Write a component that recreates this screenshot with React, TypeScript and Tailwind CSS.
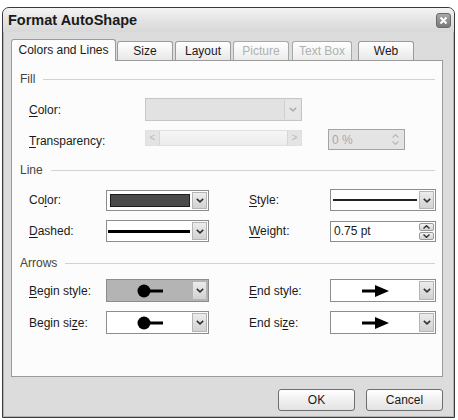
import React from "react";

const Chevron = ({ color = "#333" }: { color?: string }) => (
  <svg width="8" height="5" viewBox="0 0 8 5">
    <path d="M0.8 0.8 L4 3.8 L7.2 0.8" fill="none" stroke={color} strokeWidth="1.6" />
  </svg>
);

const DropBtn = () => (
  <div className="my-px mr-px w-[15px] flex items-center justify-center border border-[#b4b4b4] bg-gradient-to-b from-[#ececec] to-[#d2d2d2]">
    <Chevron />
  </div>
);

const Dot = () => (
  <svg width="26" height="14" viewBox="0 0 26 14">
    <circle cx="7" cy="7" r="6.5" fill="#000" />
    <rect x="7" y="5.5" width="19" height="3" fill="#000" />
  </svg>
);

const Arrow = () => (
  <svg width="27" height="12" viewBox="0 0 27 12">
    <rect x="0" y="4.5" width="16" height="3" fill="#000" />
    <polygon points="13,0 27,6 13,12" fill="#000" />
  </svg>
);

const U = ({ c }: { c: string }) => <span className="underline underline-offset-[2px]">{c}</span>;

const Section = ({ title, mt }: { title: string; mt: string }) => (
  <div className={`flex items-center h-[14px] pl-[8px] pr-[7px] ${mt}`}>
    <span className="text-[#444] leading-none">{title}</span>
    <div className="flex-1 h-px bg-[#d2d2d2] ml-[8px]" />
  </div>
);

export default function App() {
  return (
    <div className="w-[458px] h-[420px] bg-white pl-[2px] pr-[3px] pt-[7px] font-['Liberation_Sans',Arial,sans-serif] text-[12px] text-[#1a1a1a] overflow-hidden">
      <div className="h-[411px] rounded-t-[7px] border border-[#3a3a3a] bg-[#dcdcdc] flex flex-col shadow-[inset_0_0_0_1px_#b4b4b4]">
        {/* title bar */}
        <div className="h-[24px] rounded-t-[6px] bg-gradient-to-b from-[#f4f4f4] via-[#e4e4e4] to-[#d8d8d8] flex items-center justify-between pl-[5px] pr-[3px]">
          <span className="font-bold text-[14.5px] text-[#1a1a1a] leading-none">Format AutoShape</span>
          <div className="w-[15px] h-[15px] rounded-[3px] border border-[#6a6a6a] bg-gradient-to-b from-[#a8a8a8] to-[#7a7a7a] flex items-center justify-center">
            <svg width="9" height="9" viewBox="0 0 9 9">
              <path d="M1.5 1.5 L7.5 7.5 M7.5 1.5 L1.5 7.5" stroke="#fff" strokeWidth="2" />
            </svg>
          </div>
        </div>

        <div className="flex flex-col pl-[8px] pr-[11px] pt-[6px]">
          {/* tabs */}
          <div className="flex items-end h-[22px] relative z-10">
            <div className="w-[105px] h-[22px] -mb-px border border-b-0 border-[#9a9a9a] rounded-t-[3px] bg-[#fcfcfc] flex items-center justify-center pb-[1px]">
              Colors and Lines
            </div>
            <div className="w-[56px] h-[19px] border border-b-0 border-[#9a9a9a] rounded-t-[3px] bg-gradient-to-b from-[#ffffff] to-[#e8e8e8] flex items-center justify-center ml-[1px]">
              Size
            </div>
            <div className="w-[56px] h-[19px] border border-b-0 border-[#9a9a9a] rounded-t-[3px] bg-gradient-to-b from-[#ffffff] to-[#e8e8e8] flex items-center justify-center ml-[2px]">
              Layout
            </div>
            <div className="w-[56px] h-[19px] border border-b-0 border-[#a8a8a8] rounded-t-[3px] bg-gradient-to-b from-[#ffffff] to-[#ececec] flex items-center justify-center ml-[2px] text-[#b0b0b0]">
              Picture
            </div>
            <div className="w-[60px] h-[19px] border border-b-0 border-[#a8a8a8] rounded-t-[3px] bg-gradient-to-b from-[#ffffff] to-[#ececec] flex items-center justify-center ml-[3px] text-[#b0b0b0]">
              Text Box
            </div>
            <div className="w-[56px] h-[19px] border border-b-0 border-[#9a9a9a] rounded-t-[3px] bg-gradient-to-b from-[#ffffff] to-[#e8e8e8] flex items-center justify-center ml-[6px]">
              Web
            </div>
          </div>

          {/* panel */}
          <div className="h-[317px] border border-[#9a9a9a] bg-[#fcfcfc] flex flex-col">
            <Section title="Fill" mt="mt-[11px]" />

            <div className="flex items-center mt-[12px] pl-[17px] h-[23px]">
              <div className="w-[116px]">
                <U c="C" />olor:
              </div>
              <div className="w-[157px] h-[23px] border border-[#c6c6c6] bg-[#e2e2e2] flex">
                <div className="flex-1" />
                <div className="w-[16px] flex items-center justify-center border-l border-[#d0d0d0] bg-[#e6e6e6] my-px mr-px">
                  <Chevron color="#b0b0b0" />
                </div>
              </div>
            </div>

            <div className="flex items-start mt-[8px] pl-[17px] h-[21px]">
              <div className="w-[116px] pt-[3px]">
                <U c="T" />ransparency:
              </div>
              <div className="w-[157px] h-[16px] mt-[1px] border border-[#e0e0e0] bg-gradient-to-b from-[#f6f6f6] to-[#ececec] flex justify-between">
                <div className="w-[14px] h-full bg-[#e4e4e4] border-r border-[#d6d6d6] flex items-center justify-center text-[#b8b8b8] text-[10px] leading-none">
                  &lt;
                </div>
                <div className="w-[14px] h-full bg-[#e4e4e4] border-l border-[#d6d6d6] flex items-center justify-center text-[#b8b8b8] text-[10px] leading-none">
                  &gt;
                </div>
              </div>
              <div className="ml-[26px] w-[77px] h-[21px] border border-[#a4a4a4] bg-[#e4e4e4] flex items-center">
                <span className="flex-1 pl-[3px] text-[#a8a8a8]">0 %</span>
                <div className="w-[14px] h-[19px] flex flex-col items-center justify-center gap-[3px] mr-[2px]">
                  <svg width="7" height="4" viewBox="0 0 7 4"><path d="M0.5 3.5 L3.5 0.7 L6.5 3.5" fill="none" stroke="#bbb" strokeWidth="1.3" /></svg>
                  <svg width="7" height="4" viewBox="0 0 7 4"><path d="M0.5 0.5 L3.5 3.3 L6.5 0.5" fill="none" stroke="#bbb" strokeWidth="1.3" /></svg>
                </div>
              </div>
            </div>

            <Section title="Line" mt="mt-[13px]" />

            <div className="grid grid-cols-[77px_103px_40px_81px_106px] items-center mt-[12px] pl-[17px] h-[21px]">
              <div>
                Co<U c="l" />or:
              </div>
              <div className="h-[21px] border border-[#8c8c8c] bg-white flex">
                <div className="flex-1 p-[3px] pr-[2px]">
                  <div className="w-full h-full bg-[#4a4a4a] border border-[#1c1c1c]" />
                </div>
                <DropBtn />
              </div>
              <div />
              <div>
                <U c="S" />tyle:
              </div>
              <div className="h-[22px] border border-[#8c8c8c] bg-white flex">
                <div className="flex-1 flex items-center px-[2px]">
                  <div className="w-full h-[1.5px] bg-[#222]" />
                </div>
                <DropBtn />
              </div>
            </div>

            <div className="grid grid-cols-[77px_103px_40px_81px_106px] items-center mt-[10px] pl-[17px] h-[22px]">
              <div>
                <U c="D" />ashed:
              </div>
              <div className="h-[22px] border border-[#8c8c8c] bg-white flex">
                <div className="flex-1 flex items-center pl-[1px] pr-[2px]">
                  <div className="w-full h-[3px] bg-black" />
                </div>
                <DropBtn />
              </div>
              <div />
              <div>
                <U c="W" />eight:
              </div>
              <div className="h-[21px] border border-[#8c8c8c] bg-white flex">
                <div className="flex-1 flex items-center pl-[3px]">0.75 pt</div>
                <div className="w-[15px] mr-px flex flex-col justify-center gap-[1px] py-px">
                  <div className="h-[8px] border border-[#9a9a9a] rounded-[2px] bg-gradient-to-b from-[#f2f2f2] to-[#d4d4d4] flex items-center justify-center">
                    <svg width="7" height="4" viewBox="0 0 7 4"><path d="M0.5 3.5 L3.5 0.7 L6.5 3.5" fill="none" stroke="#333" strokeWidth="1.4" /></svg>
                  </div>
                  <div className="h-[8px] border border-[#9a9a9a] rounded-[2px] bg-gradient-to-b from-[#f2f2f2] to-[#d4d4d4] flex items-center justify-center">
                    <svg width="7" height="4" viewBox="0 0 7 4"><path d="M0.5 0.5 L3.5 3.3 L6.5 0.5" fill="none" stroke="#333" strokeWidth="1.4" /></svg>
                  </div>
                </div>
              </div>
            </div>

            <Section title="Arrows" mt="mt-[14px]" />

            <div className="grid grid-cols-[77px_103px_40px_81px_106px] items-center mt-[9px] pl-[17px] h-[23px]">
              <div>
                <U c="B" />egin style:
              </div>
              <div className="h-[23px] border border-[#8c8c8c] bg-[#b4b4b4] flex">
                <div className="flex-1 flex items-center justify-center">
                  <Dot />
                </div>
                <DropBtn />
              </div>
              <div />
              <div>
                <U c="E" />nd style:
              </div>
              <div className="h-[23px] border border-[#8c8c8c] bg-white flex">
                <div className="flex-1 flex items-center justify-center">
                  <Arrow />
                </div>
                <DropBtn />
              </div>
            </div>

            <div className="grid grid-cols-[77px_103px_40px_81px_106px] items-center mt-[9px] pl-[17px] h-[23px]">
              <div>
                Begin si<U c="z" />e:
              </div>
              <div className="h-[23px] border border-[#8c8c8c] bg-white flex">
                <div className="flex-1 flex items-center justify-center">
                  <Dot />
                </div>
                <DropBtn />
              </div>
              <div />
              <div>
                End si<U c="z" />e:
              </div>
              <div className="h-[23px] border border-[#8c8c8c] bg-white flex">
                <div className="flex-1 flex items-center justify-center">
                  <Arrow />
                </div>
                <DropBtn />
              </div>
            </div>
          </div>

          {/* buttons */}
          <div className="flex justify-end gap-[11px] mt-[12px]">
            <div className="w-[77px] h-[22px] rounded-[3px] border border-[#6e6e6e] bg-gradient-to-b from-[#ffffff] to-[#e2e2e2] flex items-center justify-center">
              OK
            </div>
            <div className="w-[77px] h-[22px] rounded-[3px] border border-[#6e6e6e] bg-gradient-to-b from-[#ffffff] to-[#e2e2e2] flex items-center justify-center">
              Cancel
            </div>
          </div>
        </div>
      </div>
    </div>
  );
}
